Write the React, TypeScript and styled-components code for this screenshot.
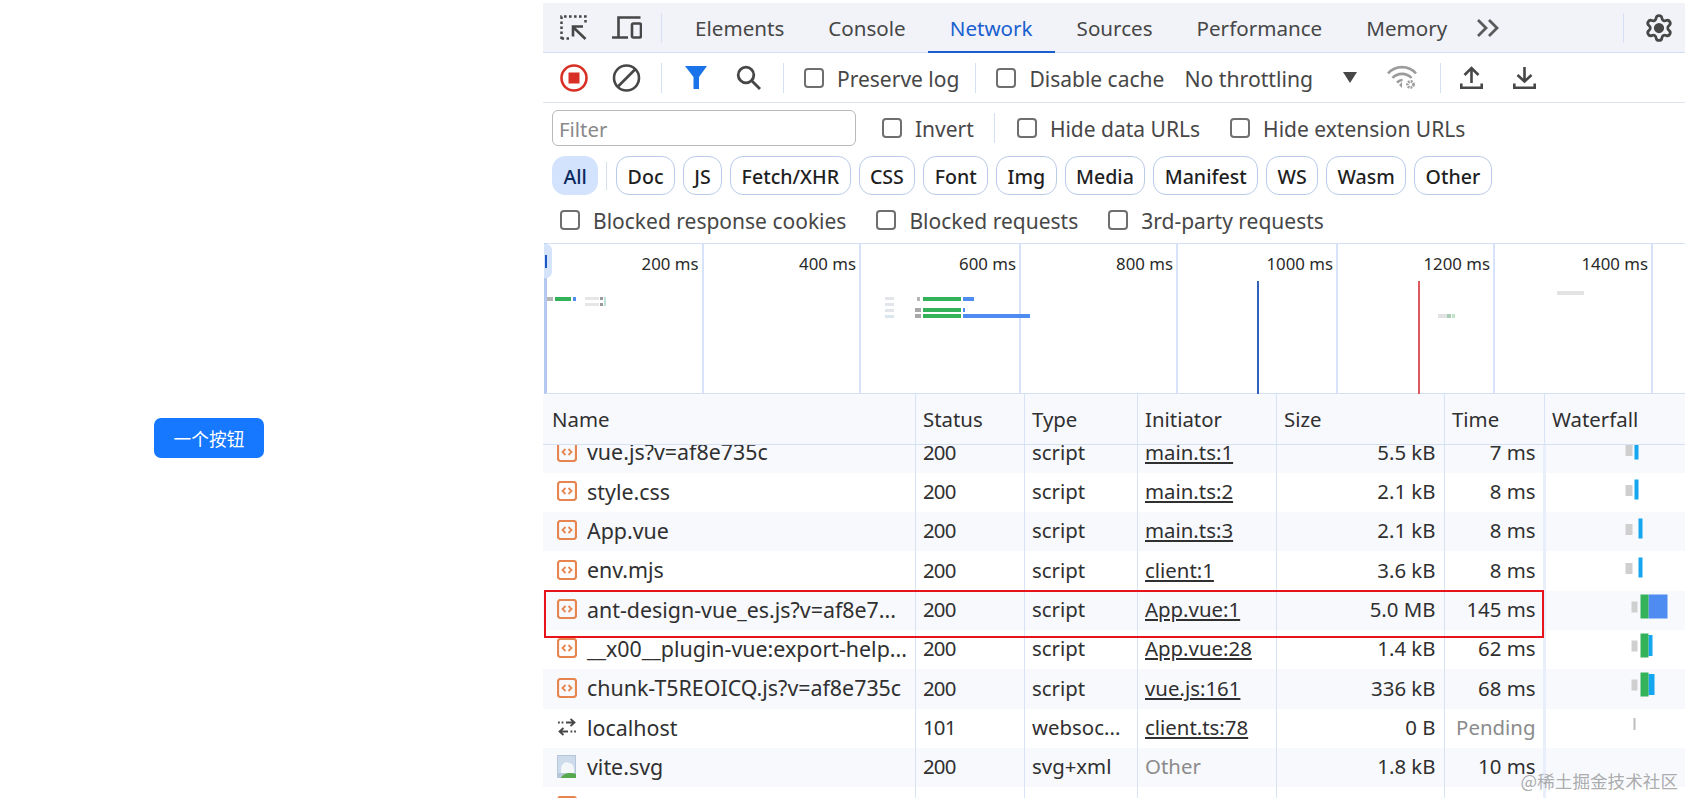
import React from "react";
import styled, { createGlobalStyle } from "styled-components";
import { Settings } from "lucide-react";

const UI_FONT = `"Noto Sans", "Open Sans", sans-serif`;
const COLUMNS = "371.5px 109px 113px 139px 168px 100px 1fr";

const GlobalStyle = createGlobalStyle`
  html, body { margin: 0; padding: 0; background: #fff; }
  body { font-family: ${UI_FONT}; overflow: hidden; }
`;

const Page = styled.div`
  display: flex;
  width: 1685px;
  height: 798px;
  overflow: hidden;
`;

const LeftPane = styled.div`
  width: 543px;
  flex: none;
  padding: 418px 0 0 154px;
  box-sizing: border-box;
`;

const PrimaryButton = styled.button`
  width: 110px;
  height: 40px;
  border: 0;
  border-radius: 7px;
  background: #1677ff;
  color: #fff;
  font: 17.7px "Noto Sans CJK SC", sans-serif;
  padding: 0;
`;

const Devtools = styled.div`
  flex: 1;
  min-width: 0;
  padding-top: 3px;
  display: flex;
  flex-direction: column;
  color: #1f1f1f;
  font-size: 20.4px;
  position: relative;
`;

const TabBar = styled.div`
  height: 49px;
  flex: none;
  display: flex;
  align-items: center;
  background: #f1f3f9;
  border-bottom: 1px solid #d3def5;
  padding-left: 17px;
`;

const Tab = styled.div<{ $active?: boolean }>`
  height: calc(100% + 1px);
  margin-bottom: -1px;
  display: flex;
  align-items: center;
  padding: 0 22px;
  font-size: 20.6px;
  color: ${(p) => (p.$active ? "#1a5fd0" : "#474747")};
  box-shadow: ${(p) => (p.$active ? "inset 0 -2px 0 #1a5fd0" : "none")};
`;

const Toolbar = styled.div`
  height: 49px;
  flex: none;
  display: flex;
  align-items: center;
  border-bottom: 1px solid #dfe3ec;
  padding-left: 17px;
`;

const Divider = styled.span<{ $l: number; $r: number; $h?: number }>`
  width: 1px;
  height: ${(p) => p.$h ?? 30}px;
  flex: none;
  background: #d5e0f3;
  margin: 0 ${(p) => p.$r}px 0 ${(p) => p.$l}px;
`;

const IconSlot = styled.span<{ $l?: number }>`
  display: flex;
  flex: none;
  margin-left: ${(p) => p.$l ?? 0}px;
  color: #474747;
`;

const CheckLabel = styled.label<{ $l?: number }>`
  display: flex;
  align-items: center;
  flex: none;
  gap: 13px;
  font-size: 21px;
  margin-left: ${(p) => p.$l ?? 0}px;
  color: #474747;
`;

const CheckText = styled.span`
  padding-top: 2px;
`;

const Box = styled.span`
  width: 20px;
  height: 20px;
  box-sizing: border-box;
  border: 2px solid #6f6f6f;
  border-radius: 4px;
  flex: none;
`;

const Throttle = styled.span`
  margin-left: 20px;
  padding-top: 2px;
  font-size: 21.2px;
  color: #474747;
`;

const Caret = styled.span`
  width: 0;
  height: 0;
  margin-left: 30px;
  border-left: 7.5px solid transparent;
  border-right: 7.5px solid transparent;
  border-top: 11px solid #474747;
`;

const FilterRow = styled.div`
  height: 36px;
  flex: none;
  display: flex;
  align-items: center;
  padding-left: 9px;
  margin: 7px 0 10px;
`;

const FilterInput = styled.div`
  width: 304px;
  height: 36px;
  box-sizing: border-box;
  border: 1px solid #b9b9bd;
  border-radius: 6px;
  padding: 2px 0 0 6px;
  color: #8a8a8a;
  display: flex;
  align-items: center;
  flex: none;
`;

const ChipRow = styled.div`
  height: 39px;
  flex: none;
  display: flex;
  align-items: center;
  gap: 8px;
  padding-left: 9px;
`;

const Chip = styled.span<{ $active?: boolean }>`
  height: 39px;
  box-sizing: border-box;
  display: flex;
  align-items: center;
  padding: 1px 10.4px 0;
  border-radius: 13px;
  font-size: 19.6px;
  font-weight: 500;
  border: 1px solid ${(p) => (p.$active ? "#d3e3fd" : "#b9cbe8")};
  background: ${(p) => (p.$active ? "#d3e3fd" : "#fff")};
  color: ${(p) => (p.$active ? "#0b2a5e" : "#1f1f1f")};
`;

const BlockedRow = styled.div`
  height: 48px;
  box-sizing: border-box;
  flex: none;
  display: flex;
  align-items: center;
  padding: 1px 0 0 17px;
`;

const Overview = styled.div`
  height: 151px;
  flex: none;
  position: relative;
  display: flex;
  border-top: 1px solid #d5e0f5;
  border-bottom: 1px solid #d5e0f5;
  box-sizing: border-box;
  border-left: 3px solid #b4c8f0;
  margin-left: 1px;
`;

const OverviewCell = styled.div<{ $w: number }>`
  width: ${(p) => p.$w}px;
  flex: none;
  box-sizing: border-box;
  border-right: 2px solid #d7e3f8;
  text-align: right;
  padding: 8px 3px 0 0;
  font-size: 16.8px;
  line-height: 24px;
  color: #2a2a2a;
`;

const OverviewChart = styled.svg`
  position: absolute;
  left: -4px;
  top: -1px;
  width: 1142px;
  height: 151px;
`;

const OverviewThumb = styled.span`
  position: absolute;
  left: -3px;
  top: 0;
  width: 8px;
  height: 34px;
  background: #d5e3fb;
  border-radius: 0 6px 6px 0;
  &::before {
    content: "";
    position: absolute;
    left: 1px;
    top: 11px;
    width: 2px;
    height: 13px;
    background: #1a56c4;
  }
`;

const Grid = styled.div<{ $stripe?: boolean }>`
  display: grid;
  grid-template-columns: ${COLUMNS};
  height: 39.33px;
  flex: none;
  background: ${(p) => (p.$stripe ? "#f7f9fc" : "#fff")};
  &:first-child {
    margin-top: -11.7px;
  }
`;

const HeaderRow = styled(Grid)`
  height: 51px;
  box-sizing: border-box;
  background: #f8f9fd;
  border-bottom: 1px solid #d5e0f5;
  color: #2a2a2a;
`;

const Cell = styled.div<{ $right?: boolean; $muted?: boolean; $link?: boolean; $tight?: boolean }>`
  display: flex;
  align-items: center;
  justify-content: ${(p) => (p.$right ? "flex-end" : "flex-start")};
  padding: 0 8px 8px 7.5px;
  box-sizing: border-box;
  border-left: 1px solid #d9e3f8;
  min-width: 0;
  white-space: nowrap;
  overflow: hidden;
  letter-spacing: ${(p) => (p.$tight ? "-0.8px" : "normal")};
  color: ${(p) => (p.$muted ? "#8b8b8b" : "#303030")};
  text-decoration: ${(p) => (p.$link ? "underline" : "none")};
  &:first-child {
    border-left: 0;
    gap: 10px;
    padding-left: 14px;
    font-size: 21.4px;
  }
`;

const HeadCell = styled(Cell)`
  padding-bottom: 0;
  &:first-child {
    padding-left: 9px;
    font-size: 20.4px;
  }
`;

const WaterfallCell = styled.div`
  border-left: 3px solid #e8eefa;
  box-sizing: border-box;
  margin-left: -1px;
`;

const List = styled.div`
  flex: 1;
  min-height: 0;
  overflow: hidden;
  position: relative;
  display: flex;
  flex-direction: column;
`;

const RedBox = styled.div`
  position: absolute;
  left: 1px;
  top: 145px;
  width: 1000px;
  height: 48px;
  box-sizing: border-box;
  border: 2px solid #e8141c;
`;

const Watermark = styled.div`
  position: absolute;
  right: 7px;
  bottom: 5px;
  font: 17.6px "Noto Sans CJK SC", sans-serif;
  color: rgba(120, 120, 120, 0.62);
  white-space: nowrap;
`;

const GearSlot = styled(IconSlot)`
  margin-left: 20px;
  svg circle {
    fill: currentColor;
  }
`;

const InspectIcon = () => (
  <svg width="27" height="25" viewBox="0 0 27 25" fill="none" stroke="currentColor">
    <path d="M1.5 24V1.5H25.5V10M1.5 23.5H9" strokeWidth="2.5" strokeDasharray="2.6 2.4" />
    <path d="M25.5 24L13.5 12.5M13 21.5V11.5H23" strokeWidth="2.6" />
  </svg>
);

const DeviceIcon = () => (
  <svg width="30" height="23" viewBox="0 0 30 23" fill="none" stroke="currentColor" strokeWidth="2.6">
    <path d="M6.5 21V1.5H28.5M0 21.5H16" />
    <rect x="20" y="7.5" width="9" height="14" rx="1.5" />
  </svg>
);

const ChevronsIcon = () => (
  <svg width="24" height="20" viewBox="0 0 24 20" fill="none" stroke="#5a5a5a" strokeWidth="2.8">
    <path d="M2 2L10 10L2 18M13 2L21 10L13 18" />
  </svg>
);

const RecordIcon = () => (
  <svg width="28" height="28" viewBox="0 0 28 28">
    <circle cx="14" cy="14" r="12.5" fill="none" stroke="#d93025" strokeWidth="2.6" />
    <rect x="8.5" y="8.5" width="11" height="11" fill="#d93025" />
  </svg>
);

const ClearIcon = () => (
  <svg width="29" height="28" viewBox="0 0 29 28" fill="none" stroke="currentColor" strokeWidth="2.6">
    <circle cx="14.5" cy="14" r="12.5" />
    <path d="M5.5 23L23.5 5" />
  </svg>
);

const FunnelIcon = () => (
  <svg width="22" height="23" viewBox="0 0 22 23">
    <path d="M0 0H22L14 11V23H8.5V11Z" fill="#1a73e8" />
  </svg>
);

const SearchIcon = () => (
  <svg width="25" height="25" viewBox="0 0 25 25" fill="none" stroke="currentColor" strokeWidth="2.8">
    <circle cx="10" cy="10" r="7.8" />
    <path d="M15.5 15.5L24 24" />
  </svg>
);

const WifiIcon = () => (
  <svg width="30" height="25" viewBox="0 0 30 25" fill="none" stroke="#9c9c9c" strokeWidth="2.6">
    <path d="M1 8.5C8.5 0 21.5 0 29 8.5" />
    <path d="M5.5 13C10.5 7.5 19.5 7.5 24.5 13" />
    <path d="M10 17.5C12 15.5 14 15 15.5 15" />
    <path d="M12 20L15 17V23Z" fill="#9c9c9c" stroke="none" />
    <circle cx="23.5" cy="19.5" r="3" strokeWidth="2.8" strokeDasharray="1.8 1" />
  </svg>
);

const UploadIcon = () => (
  <svg width="23" height="23" viewBox="0 0 23 23" fill="none" stroke="currentColor" strokeWidth="2.6">
    <path d="M11.5 17V2M4.5 9L11.5 2L18.5 9M1.3 17.5V21.7H21.7V17.5" />
  </svg>
);

const DownloadIcon = () => (
  <svg width="23" height="23" viewBox="0 0 23 23" fill="none" stroke="currentColor" strokeWidth="2.6">
    <path d="M11.5 1V15.5M4.5 9L11.5 15.5L18.5 9M1.3 17.5V21.7H21.7V17.5" />
  </svg>
);

const ScriptIcon = () => (
  <svg width="20" height="20" viewBox="0 0 20 20" fill="none" stroke="#e6854f" style={{ flex: "none" }}>
    <rect x="1" y="1" width="18" height="18" rx="2.5" strokeWidth="2.2" />
    <path d="M8.5 7L5.5 10L8.5 13M11.5 7L14.5 10L11.5 13" strokeWidth="1.8" />
  </svg>
);

const SocketIcon = () => (
  <svg width="20" height="18" viewBox="0 0 20 18" fill="none" stroke="#474747" strokeWidth="1.8" style={{ flex: "none" }}>
    <path d="M9 4.5H17M13.5 1L17.5 4.5L13.5 8" />
    <path d="M11 13.5H3M6.5 10L2.5 13.5L6.5 17" />
    <path d="M1 4.5H6.5M13.5 13.5H19" strokeDasharray="1.8 1.8" />
  </svg>
);

const ImageIcon = () => (
  <svg width="20" height="23" viewBox="0 0 20 23" style={{ flex: "none" }}>
    <rect width="19" height="23" fill="#b5c7da" />
    <rect x="1" y="1" width="17" height="17" fill="#cddbea" />
    <path d="M4 13C5 8 9 6 12 8C15 8 17 11 17 14V18H4Z" fill="#f4f7fa" />
    <path d="M4 23C6 18 13 17 19 19V23Z" fill="#55a84c" />
  </svg>
);

type Bar = { x: number; y: number; w: number; h: number; fill: string };

const GREY = "#cfcfcf";
const SKY = "#14a6ee";
const GREEN = "#34b25a";
const BLUE = "#4f8cf2";

const bars = (greyX: number, mainX: number, mainW: number): Bar[] => [
  { x: greyX, y: 12, w: 7, h: 11, fill: GREY },
  { x: mainX, y: 6.5, w: mainW, h: 20, fill: SKY },
];

const stacked = (skyW: number, blue?: boolean): Bar[] => [
  { x: 85.5, y: 10.5, w: 6, h: 11, fill: GREY },
  { x: 102.5, y: blue ? 3.5 : 5, w: skyW, h: blue ? 24 : 21, fill: blue ? BLUE : SKY },
  { x: 94.5, y: 3.5, w: 8, h: 24, fill: GREEN },
];

const rows = [
  { name: "vue.js?v=af8e735c", status: "200", type: "script", init: "main.ts:1", size: "5.5 kB", time: "7 ms", wf: bars(79.5, 88.5, 4), stripe: true },
  { name: "style.css", status: "200", type: "script", init: "main.ts:2", size: "2.1 kB", time: "8 ms", wf: bars(79.5, 88.5, 4) },
  { name: "App.vue", status: "200", type: "script", init: "main.ts:3", size: "2.1 kB", time: "8 ms", wf: bars(79.5, 92.5, 4), stripe: true },
  { name: "env.mjs", status: "200", type: "script", init: "client:1", size: "3.6 kB", time: "8 ms", wf: bars(79.5, 92.5, 4) },
  { name: "ant-design-vue_es.js?v=af8e7...", status: "200", type: "script", init: "App.vue:1", size: "5.0 MB", time: "145 ms", wf: stacked(19, true), stripe: true },
  { name: "__x00__plugin-vue:export-help...", status: "200", type: "script", init: "App.vue:28", size: "1.4 kB", time: "62 ms", wf: stacked(4) },
  { name: "chunk-T5REOICQ.js?v=af8e735c", status: "200", type: "script", init: "vue.js:161", size: "336 kB", time: "68 ms", wf: stacked(6), stripe: true },
  { name: "localhost", icon: "socket", status: "101", type: "websoc...", init: "client.ts:78", size: "0 B", time: "Pending", pending: true, wf: [{ x: 87.5, y: 9, w: 2, h: 12, fill: "#bdbdbd" }] },
  { name: "vite.svg", icon: "image", status: "200", type: "svg+xml", init: "Other", other: true, size: "1.8 kB", time: "10 ms", wf: [], stripe: true },
  { name: "", status: "", type: "", init: "", size: "", time: "", wf: [] },
];

const ticks = [
  { label: "200 ms", w: 156.5 },
  { label: "400 ms", w: 157.5 },
  { label: "600 ms", w: 160 },
  { label: "800 ms", w: 157 },
  { label: "1000 ms", w: 160 },
  { label: "1200 ms", w: 157 },
  { label: "1400 ms", w: 158 },
];

// overview marks, measured from the overview's top left corner
const overviewMarks: Bar[] = [
  { x: 4, y: 54, w: 6, h: 4, fill: "#b5b5b5" },
  { x: 12, y: 54, w: 16, h: 4, fill: GREEN },
  { x: 30, y: 54, w: 3, h: 4, fill: BLUE },
  { x: 42, y: 54, w: 14, h: 3, fill: "#e6e6e6" },
  { x: 42, y: 60, w: 14, h: 3, fill: "#e6e6e6" },
  { x: 57, y: 54, w: 3, h: 3, fill: "#999" },
  { x: 57, y: 60, w: 3, h: 3, fill: "#999" },
  { x: 61, y: 54, w: 2, h: 9, fill: "#bfe3dc" },
  { x: 342, y: 54, w: 9, h: 3, fill: "#e2e6ea" },
  { x: 342, y: 60, w: 9, h: 3, fill: "#e2e6ea" },
  { x: 342, y: 66, w: 9, h: 3, fill: "#e2e6ea" },
  { x: 342, y: 72, w: 9, h: 3, fill: "#dbe7ee" },
  { x: 374, y: 54, w: 3, h: 4, fill: "#b5b5b5" },
  { x: 380, y: 54, w: 38, h: 4, fill: GREEN },
  { x: 420, y: 54, w: 11, h: 4, fill: BLUE },
  { x: 372, y: 65, w: 6, h: 4, fill: "#a8a8a8" },
  { x: 380, y: 65, w: 38, h: 4, fill: GREEN },
  { x: 420, y: 65, w: 2, h: 4, fill: BLUE },
  { x: 372, y: 71, w: 6, h: 4, fill: "#a8a8a8" },
  { x: 380, y: 71, w: 38, h: 4, fill: GREEN },
  { x: 420, y: 71, w: 67, h: 4, fill: BLUE },
  { x: 895, y: 71, w: 9, h: 4, fill: "#e2e2e2" },
  { x: 904, y: 71, w: 4, h: 4, fill: "#a9cdb4" },
  { x: 909, y: 71, w: 3, h: 4, fill: "#bfe3c8" },
  { x: 1014, y: 48, w: 27, h: 4, fill: "#e3e3e3" },
  { x: 714, y: 38, w: 2, h: 113, fill: "#2f62b8" },
  { x: 875, y: 38, w: 2, h: 113, fill: "#dc5a5f" },
];

const renderIcon = (icon?: string) => {
  if (icon === "socket") return <SocketIcon />;
  if (icon === "image") return <ImageIcon />;
  return <ScriptIcon />;
};

const Check = ({ label, l }: { label: string; l?: number }) => (
  <CheckLabel $l={l}>
    <Box />
    <CheckText>{label}</CheckText>
  </CheckLabel>
);

const App = () => {
  return (
    <Page>
      <GlobalStyle />
      <LeftPane>
        <PrimaryButton>一个按钮</PrimaryButton>
      </LeftPane>
      <Devtools>
        <TabBar>
          <IconSlot><InspectIcon /></IconSlot>
          <IconSlot $l={25}><DeviceIcon /></IconSlot>
          <Divider $l={19} $r={11} />
          <Tab>Elements</Tab>
          <Tab>Console</Tab>
          <Tab $active>Network</Tab>
          <Tab>Sources</Tab>
          <Tab>Performance</Tab>
          <Tab>Memory</Tab>
          <IconSlot $l={7}><ChevronsIcon /></IconSlot>
          <Divider $l={123} $r={0} />
          <GearSlot><Settings size={30} strokeWidth={2.2} /></GearSlot>
        </TabBar>
        <Toolbar>
          <IconSlot><RecordIcon /></IconSlot>
          <IconSlot $l={24}><ClearIcon /></IconSlot>
          <Divider $l={20} $r={23} />
          <IconSlot><FunnelIcon /></IconSlot>
          <IconSlot $l={29}><SearchIcon /></IconSlot>
          <Divider $l={22} $r={20} />
          <Check label="Preserve log" />
          <Divider $l={16} $r={20} />
          <Check label="Disable cache" />
          <Throttle>No throttling</Throttle>
          <Caret />
          <IconSlot $l={30}><WifiIcon /></IconSlot>
          <Divider $l={23} $r={19} />
          <IconSlot><UploadIcon /></IconSlot>
          <IconSlot $l={30}><DownloadIcon /></IconSlot>
        </Toolbar>
        <FilterRow>
          <FilterInput>Filter</FilterInput>
          <Check label="Invert" l={26} />
          <Divider $l={20} $r={22} />
          <Check label="Hide data URLs" />
          <Check label="Hide extension URLs" l={30} />
        </FilterRow>
        <ChipRow>
          <Chip $active>All</Chip>
          <Divider $l={0} $r={1} $h={28} />
          {["Doc", "JS", "Fetch/XHR", "CSS", "Font", "Img", "Media", "Manifest", "WS", "Wasm", "Other"].map((c) => (
            <Chip key={c}>{c}</Chip>
          ))}
        </ChipRow>
        <BlockedRow>
          <Check label="Blocked response cookies" />
          <Check label="Blocked requests" l={30} />
          <Check label="3rd-party requests" l={30} />
        </BlockedRow>
        <Overview>
          {ticks.map((t) => (
            <OverviewCell key={t.label} $w={t.w}>{t.label}</OverviewCell>
          ))}
          <OverviewChart viewBox="0 0 1142 151">
            {overviewMarks.map((m, i) => (
              <rect key={i} x={m.x} y={m.y} width={m.w} height={m.h} fill={m.fill} />
            ))}
          </OverviewChart>
          <OverviewThumb />
        </Overview>
        <HeaderRow>
          {["Name", "Status", "Type", "Initiator", "Size", "Time", "Waterfall"].map((h) => (
            <HeadCell key={h}>{h}</HeadCell>
          ))}
        </HeaderRow>
        <List>
          {rows.map((r, i) => (
            <Grid key={i} $stripe={r.stripe}>
              <Cell>
                {renderIcon(r.icon)}
                {r.name}
              </Cell>
              <Cell $tight>{r.status}</Cell>
              <Cell>{r.type}</Cell>
              <Cell $link={!r.other} $muted={r.other}>{r.init}</Cell>
              <Cell $right>{r.size}</Cell>
              <Cell $right $muted={r.pending}>{r.time}</Cell>
              <WaterfallCell>
                <svg width="140" height="39" viewBox="0 0 140 39">
                  {r.wf.map((b, j) => (
                    <rect key={j} x={b.x} y={b.y} width={b.w} height={b.h} fill={b.fill} />
                  ))}
                </svg>
              </WaterfallCell>
            </Grid>
          ))}
          <RedBox />
        </List>
        <Watermark>@稀土掘金技术社区</Watermark>
      </Devtools>
    </Page>
  );
};

export default App;
